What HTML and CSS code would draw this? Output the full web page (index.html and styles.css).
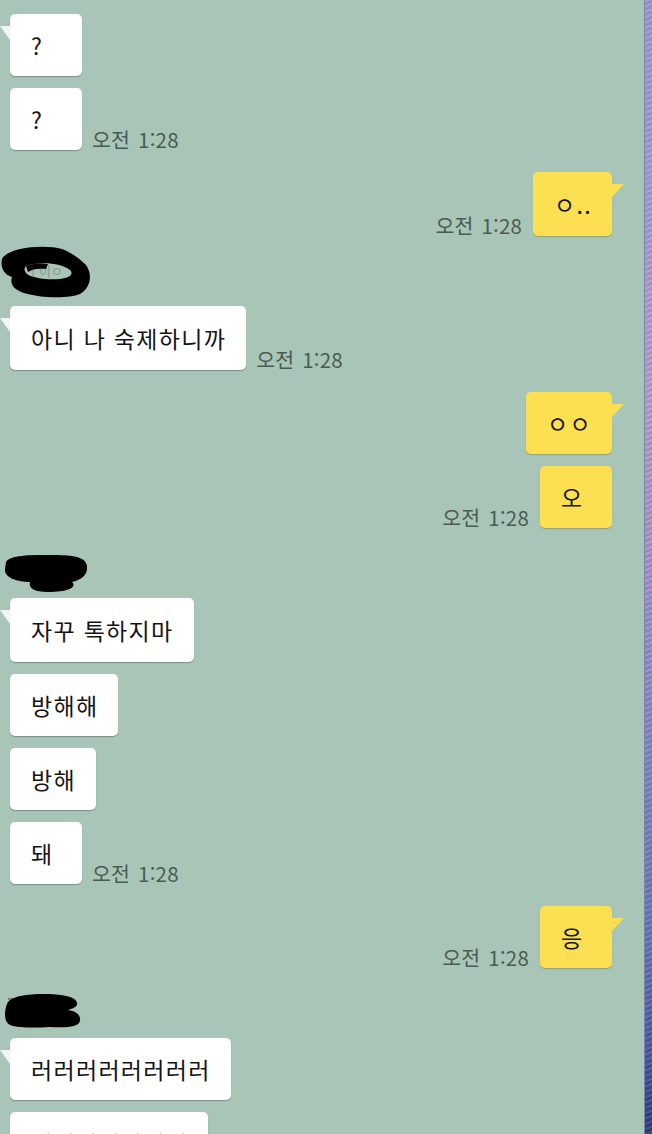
FILE: index.html
```html
<!DOCTYPE html>
<html lang="ko">
<head>
<meta charset="utf-8">
<title>채팅</title>
<link rel="stylesheet" href="styles.css">
</head>
<body>
<div class="screen">
  <main class="chat">
    <div class="msg in tail"><div class="bubble">?</div></div>
    <div class="msg in"><div class="bubble">?</div><span class="time">오전 1:28</span></div>

    <div class="msg out tail group"><span class="time">오전 1:28</span><div class="bubble tall">ㅇ..</div></div>

    <div class="name group">
      <svg class="scribble s1" width="96" height="56" viewBox="0 0 96 56">
        <text x="27" y="31" class="hidden-name">ㅣ이ㅇ</text>
        <path fill="#000" fill-rule="evenodd" d="M2 14 C 8 2, 45 -1, 62 4 C 72 8, 80 14, 86 20 C 92 28, 92 42, 80 49 C 68 54, 40 53, 24 48 C 12 44, 10 38, 12 32 C 4 30, 0 22, 2 14 Z M26 21 C 40 16, 62 18, 70 25 C 74 29, 70 33, 60 34 C 46 35, 32 33, 27 29 C 24 26, 24 23, 26 21 Z"/>
        <path d="M26 21 C 34 18, 42 18, 48 19 L 46 24 C 38 23, 32 24, 28 27 Z" fill="#000"/>
      </svg>
    </div>
    <div class="msg in tail"><div class="bubble tall">아니 나 숙제하니까</div><span class="time">오전 1:28</span></div>

    <div class="msg out tail group"><div class="bubble">ㅇㅇ</div></div>
    <div class="msg out"><span class="time">오전 1:28</span><div class="bubble">오</div></div>

    <div class="name group">
      <svg class="scribble s2" width="96" height="44" viewBox="0 0 96 44">
        <path d="M6 10 C 10 3, 30 3, 50 3 C 70 3, 86 4, 87 14 C 88 24, 80 28, 72 30 C 78 36, 66 40, 48 40 C 34 40, 28 36, 30 30 C 18 30, 4 26, 5 17 Z" fill="#000"/>
      </svg>
    </div>
    <div class="msg in tail"><div class="bubble tall">자꾸 톡하지마</div></div>
    <div class="msg in"><div class="bubble">방해해</div></div>
    <div class="msg in"><div class="bubble">방해</div></div>
    <div class="msg in"><div class="bubble">돼</div><span class="time">오전 1:28</span></div>

    <div class="msg out tail group"><span class="time">오전 1:28</span><div class="bubble">응</div></div>

    <div class="name group">
      <svg class="scribble s3" width="96" height="44" viewBox="0 0 96 44">
        <path d="M8 9 L 26 9" stroke="#555" stroke-width="1.2"/>
        <path d="M7 14 C 10 6, 28 4, 44 4 C 60 4, 76 6, 77 13 C 78 17, 72 19, 68 20 C 76 21, 81 25, 80 31 C 79 37, 66 38, 50 37 C 36 38, 18 38, 10 35 C 4 32, 4 22, 7 14 Z" fill="#000"/>
      </svg>
    </div>
    <div class="msg in tail"><div class="bubble">러러러러러러러러</div></div>
    <div class="msg in"><div class="bubble">러러러러러러러</div></div>
  </main>
  <aside class="wallpaper"></aside>
</div>
</body>
</html>
```

FILE: styles.css
```css
* { box-sizing: border-box; }

html, body {
  margin: 0;
  padding: 0;
  height: 100%;
  overflow: hidden;
}

body {
  font-family: "Noto Sans CJK KR", "Noto Sans", sans-serif;
  background: #a8c5b7;
}

.screen {
  display: flex;
  width: 652px;
  height: 1134px;
  overflow: hidden;
}

.chat {
  flex: 0 0 644px;
  background: #a8c5b7;
  padding-top: 14px;
  display: flex;
  flex-direction: column;
  overflow: hidden;
}

.wallpaper {
  flex: 0 0 8px;
  border-left: 1px solid #7b84ab;
  background:
    repeating-linear-gradient(160deg, rgba(255,255,255,0.10) 0 2px, rgba(0,0,0,0.06) 2px 5px),
    linear-gradient(to bottom,
      #9b98cc 0%,
      #a39bcf 18%,
      #b59ccb 34%,
      #a892c6 48%,
      #8e8cc6 58%,
      #7683bd 70%,
      #6576b4 82%,
      #4b5c9c 92%,
      #2c3b7a 100%);
}

.msg {
  display: flex;
  align-items: flex-end;
  margin-top: 12px;
}

.msg:first-child { margin-top: 0; }

.msg.group,
.name.group { margin-top: 22px; }

.msg.in {
  padding-left: 10px;
  gap: 10px;
}

.msg.out {
  justify-content: flex-end;
  padding-right: 32px;
  gap: 11px;
}

.bubble {
  position: relative;
  min-width: 72px;
  height: 62px;
  padding: 0 20px 0 21px;
  display: flex;
  align-items: center;
  font-size: 23px;
  letter-spacing: 1.3px;
  word-spacing: 0;
  line-height: 28px;
  color: #141414;
  background: #ffffff;
  border-radius: 5px;
  box-shadow: 0 1px 1px rgba(60, 80, 70, 0.45);
  white-space: nowrap;
}

.bubble.tall { height: 64px; }

.msg.out .bubble {
  background: #fce051;
  box-shadow: 0 1px 1px rgba(120, 110, 40, 0.4);
}

.msg.in.tail .bubble::before {
  content: "";
  position: absolute;
  left: -10px;
  top: 12px;
  width: 10px;
  height: 14px;
  background: #f3f5f4;
  clip-path: polygon(0 0, 100% 0, 100% 100%);
}

.msg.out.tail .bubble::after {
  content: "";
  position: absolute;
  right: -12px;
  top: 12px;
  width: 12px;
  height: 13px;
  background: #fce051;
  clip-path: polygon(0 0, 100% 0, 0 100%);
}

.time {
  font-size: 20.5px;
  line-height: 20px;
  color: #4a5b52;
  white-space: nowrap;
  word-spacing: 2px;
  letter-spacing: 0.2px;
  margin-bottom: 1px;
}

.name {
  height: 36px;
  overflow: visible;
}

.name + .msg { margin-top: 12px; }

.scribble {
  display: block;
  overflow: visible;
}

.s1 { margin-top: -13px; }
.s2 { margin-top: 2px; }
.s3 { margin-top: 0; }

.hidden-name {
  font-family: "Noto Sans CJK KR", sans-serif;
  font-size: 13px;
  fill: #8a9b92;
}
```
